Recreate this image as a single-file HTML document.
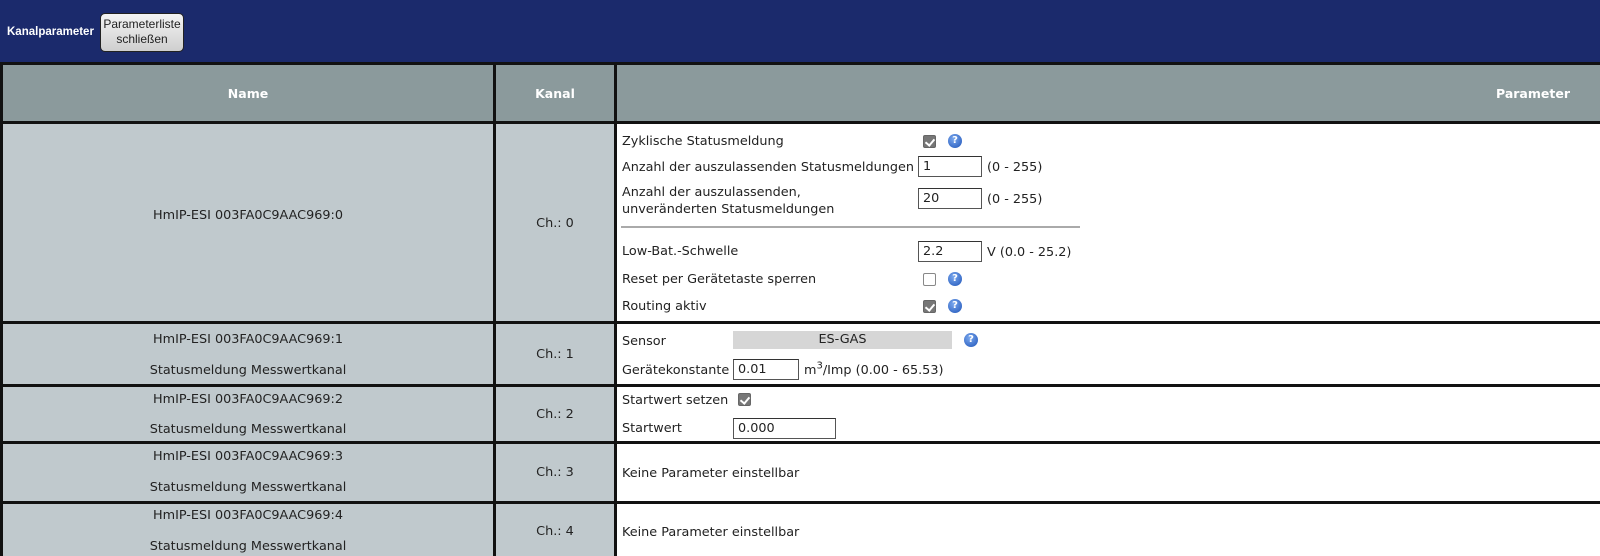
<!DOCTYPE html>
<html><head><meta charset="utf-8"><style>
*{margin:0;padding:0;box-sizing:border-box}
body{width:1600px;height:556px;overflow:hidden;background:#1b2a6c;font-family:"DejaVu Sans","Liberation Sans",sans-serif;font-size:12.8px;color:#222;position:relative}
.a{position:absolute;white-space:nowrap}
.line{position:absolute;background:#111}
.hd{position:absolute;background:#8b9a9c}
.g{position:absolute;background:#c0c9cd}
.w{position:absolute;background:#fff}
.ht{color:#fff;font-weight:bold;font-size:12.5px;transform:translateX(-50%)}
.c{transform:translateX(-50%)}
.cb{position:absolute;width:13px;height:13px;border:1px solid #888;border-radius:2px;background:#fff}
.cb.on{background:#777;border-color:#666}
.cb.on::after{content:"";position:absolute;left:3px;top:1px;width:4px;height:7px;border:solid #fff;border-width:0 2px 2px 0;transform:rotate(40deg)}
.hp{position:absolute;width:14px;height:14px;border-radius:50%;background:radial-gradient(circle at 40% 35%,#7aa8ee,#1f54b8);color:#fff;font-size:10px;font-weight:bold;text-align:center;line-height:14px}
.in{position:absolute;height:21px;border:1px solid #555;border-top-color:#333;background:#fff;padding-left:4px;line-height:19px;font-size:12.8px}
</style></head><body>
<div class="a" style="left:7px;top:26px;color:#fff;font-weight:bold;font-size:11.5px;font-family:'Liberation Sans',sans-serif">Kanalparameter</div>
<div class="a" style="left:100px;top:13px;width:84px;height:39px;border:1px solid #222;border-radius:5px;background:linear-gradient(#f4f4f4,#cfcfcf);text-align:center;font-size:12px;line-height:15px;padding-top:3px;color:#222;font-family:'Liberation Sans',sans-serif">Parameterliste<br>schließen</div>

<div class="line" style="left:0;top:62px;width:1600px;height:494px"></div>
<div class="hd" style="left:3px;top:65px;width:490px;height:56px"></div>
<div class="hd" style="left:496px;top:65px;width:118px;height:56px"></div>
<div class="hd" style="left:617px;top:65px;width:983px;height:56px"></div>
<div class="a ht" style="left:248px;top:86px">Name</div>
<div class="a ht" style="left:555px;top:86px">Kanal</div>
<div class="a ht" style="left:1533px;top:86px">Parameter</div>

<div class="g" style="left:3px;top:124px;width:490px;height:197px"></div>
<div class="g" style="left:496px;top:124px;width:118px;height:197px"></div>
<div class="w" style="left:617px;top:124px;width:983px;height:197px"></div>

<div class="g" style="left:3px;top:324px;width:490px;height:60px"></div>
<div class="g" style="left:496px;top:324px;width:118px;height:60px"></div>
<div class="w" style="left:617px;top:324px;width:983px;height:60px"></div>

<div class="g" style="left:3px;top:387px;width:490px;height:54px"></div>
<div class="g" style="left:496px;top:387px;width:118px;height:54px"></div>
<div class="w" style="left:617px;top:387px;width:983px;height:54px"></div>

<div class="g" style="left:3px;top:444px;width:490px;height:57px"></div>
<div class="g" style="left:496px;top:444px;width:118px;height:57px"></div>
<div class="w" style="left:617px;top:444px;width:983px;height:57px"></div>

<div class="g" style="left:3px;top:504px;width:490px;height:52px"></div>
<div class="g" style="left:496px;top:504px;width:118px;height:52px"></div>
<div class="w" style="left:617px;top:504px;width:983px;height:52px"></div>

<div class="a c" style="left:248px;top:208px">HmIP-ESI 003FA0C9AAC969:0</div>
<div class="a c" style="left:248px;top:332px">HmIP-ESI 003FA0C9AAC969:1</div>
<div class="a c" style="left:248px;top:363px">Statusmeldung Messwertkanal</div>
<div class="a c" style="left:248px;top:392px">HmIP-ESI 003FA0C9AAC969:2</div>
<div class="a c" style="left:248px;top:422px">Statusmeldung Messwertkanal</div>
<div class="a c" style="left:248px;top:449px">HmIP-ESI 003FA0C9AAC969:3</div>
<div class="a c" style="left:248px;top:480px">Statusmeldung Messwertkanal</div>
<div class="a c" style="left:248px;top:508px">HmIP-ESI 003FA0C9AAC969:4</div>
<div class="a c" style="left:248px;top:539px">Statusmeldung Messwertkanal</div>

<div class="a c" style="left:555px;top:216px">Ch.: 0</div>
<div class="a c" style="left:555px;top:347px">Ch.: 1</div>
<div class="a c" style="left:555px;top:407px">Ch.: 2</div>
<div class="a c" style="left:555px;top:465px">Ch.: 3</div>
<div class="a c" style="left:555px;top:524px">Ch.: 4</div>

<div class="a" style="left:622px;top:134px">Zyklische Statusmeldung</div>
<div class="cb on" style="left:923px;top:135px"></div><div class="hp" style="left:948px;top:134px">?</div>
<div class="a" style="left:622px;top:160px">Anzahl der auszulassenden Statusmeldungen</div>
<div class="in" style="left:918px;top:156px;width:64px">1</div>
<div class="a" style="left:987px;top:160px">(0 - 255)</div>
<div class="a" style="left:622px;top:184px;line-height:17px">Anzahl der auszulassenden,<br>unveränderten Statusmeldungen</div>
<div class="in" style="left:918px;top:188px;width:64px">20</div>
<div class="a" style="left:987px;top:192px">(0 - 255)</div>
<div class="a" style="left:621px;top:226px;width:459px;height:2px;background:#aaa"></div>
<div class="a" style="left:622px;top:244px">Low-Bat.-Schwelle</div>
<div class="in" style="left:918px;top:241px;width:64px">2.2</div>
<div class="a" style="left:987px;top:245px">V (0.0 - 25.2)</div>
<div class="a" style="left:622px;top:272px">Reset per Gerätetaste sperren</div>
<div class="cb" style="left:923px;top:273px"></div><div class="hp" style="left:948px;top:272px">?</div>
<div class="a" style="left:622px;top:299px">Routing aktiv</div>
<div class="cb on" style="left:923px;top:300px"></div><div class="hp" style="left:948px;top:299px">?</div>

<div class="a" style="left:622px;top:334px">Sensor</div>
<div class="a" style="left:733px;top:331px;width:219px;height:18px;background:#d6d6d6;text-align:center;line-height:18px">ES-GAS</div>
<div class="hp" style="left:964px;top:333px">?</div>
<div class="a" style="left:622px;top:363px">Gerätekonstante</div>
<div class="in" style="left:733px;top:359px;width:66px">0.01</div>
<div class="a" style="left:804px;top:363px">m<sup style="font-size:10px;line-height:0">3</sup>/Imp (0.00 - 65.53)</div>

<div class="a" style="left:622px;top:393px">Startwert setzen</div>
<div class="cb on" style="left:738px;top:393px"></div>
<div class="a" style="left:622px;top:421px">Startwert</div>
<div class="in" style="left:733px;top:418px;width:103px">0.000</div>

<div class="a" style="left:622px;top:466px">Keine Parameter einstellbar</div>
<div class="a" style="left:622px;top:525px">Keine Parameter einstellbar</div>
</body></html>
